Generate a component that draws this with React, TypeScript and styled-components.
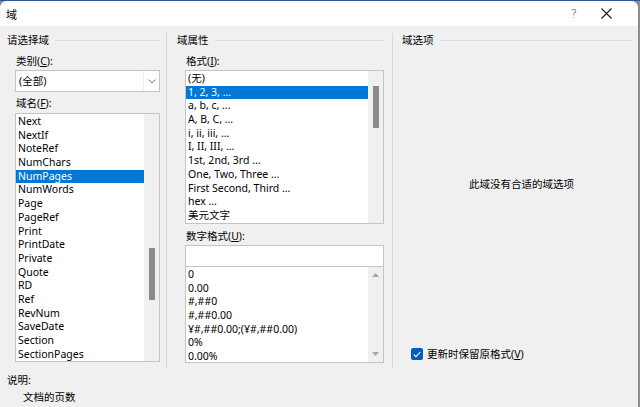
import React from 'react';
import styled, { createGlobalStyle } from 'styled-components';

const GlobalStyle = createGlobalStyle`
    html, body {
        margin: 0;
        padding: 0;
        background: linear-gradient(#34558c 0 1px, #8e8e8e 1px);
        height: 407px;
        overflow: hidden;
    }
    * {
        box-sizing: border-box;
    }
`;

const fieldNames = [
    'Next', 'NextIf', 'NoteRef', 'NumChars', 'NumPages', 'NumWords', 'Page', 'PageRef', 'Print',
    'PrintDate', 'Private', 'Quote', 'RD', 'Ref', 'RevNum', 'SaveDate', 'Section', 'SectionPages',
];

const formats = [
    '(无)', '1, 2, 3, ...', 'a, b, c, ...', 'A, B, C, ...', 'i, ii, iii, ...', 'I, II, III, ...',
    '1st, 2nd, 3rd ...', 'One, Two, Three ...', 'First Second, Third ...', 'hex ...', '美元文字',
];

const numberFormats = ['0', '0.00', '#,##0', '#,##0.00', '¥#,##0.00;(¥#,##0.00)', '0%', '0.00%'];

const App = () => {
    return (
        <>
            <GlobalStyle />
            <Window>
                <TitleBar>
                    <Title>域</Title>
                    <TitleButtons>
                        <Help>?</Help>
                        <svg width="11" height="11" viewBox="0 0 11 11">
                            <path d="M0.5 0.5 L10.5 10.5 M10.5 0.5 L0.5 10.5" stroke="#1a1a1a" strokeWidth="1.1" />
                        </svg>
                    </TitleButtons>
                </TitleBar>

                <Columns>
                    {/* 请选择域 */}
                    <Column $width={166} $first>
                        <GroupHeading>请选择域</GroupHeading>
                        <Label $top={7}>类别(<u>C</u>):</Label>
                        <Combo $width={145}>
                            <ComboText>(全部)</ComboText>
                            <ComboButton>
                                <svg width="8" height="5" viewBox="0 0 8 5">
                                    <path d="M0.5 0.5 L4 4 L7.5 0.5" fill="none" stroke="#7a7a7a" strokeWidth="1" />
                                </svg>
                            </ComboButton>
                        </Combo>
                        <Label $top={4}>域名(<u>F</u>):</Label>
                        <ListBox $width={145} $height={249} $top={3}>
                            <Items>
                                {fieldNames.map((name) => (
                                    <Item key={name} $selected={name === 'NumPages'}>{name}</Item>
                                ))}
                            </Items>
                            <ScrollTrack>
                                <Thumb $offset={134} $size={52} />
                            </ScrollTrack>
                        </ListBox>
                    </Column>

                    {/* 域属性 */}
                    <Column $width={226}>
                        <GroupHeading>域属性</GroupHeading>
                        <Label $top={7}>格式(<u>I</u>):</Label>
                        <ListBox $width={199} $height={154} $top={2}>
                            <Items>
                                {formats.map((f) => (
                                    <Item key={f} $selected={f === '1, 2, 3, ...'}>{f}</Item>
                                ))}
                            </Items>
                            <ScrollTrack>
                                <Thumb $offset={15} $size={42} />
                            </ScrollTrack>
                        </ListBox>
                        <Label $top={5}>数字格式(<u>U</u>):</Label>
                        <TextInput />
                        <ListBox $width={199} $height={97} $top={0}>
                            <Items>
                                {numberFormats.map((f) => (
                                    <Item key={f}>{f}</Item>
                                ))}
                            </Items>
                            <ArrowTrack>
                                <svg width="7" height="4" viewBox="0 0 7 4">
                                    <path d="M0 4 L3.5 0 L7 4 Z" fill="#a6a6a6" />
                                </svg>
                                <svg width="7" height="4" viewBox="0 0 7 4">
                                    <path d="M0 0 L3.5 4 L7 0 Z" fill="#a6a6a6" />
                                </svg>
                            </ArrowTrack>
                        </ListBox>
                    </Column>

                    {/* 域选项 */}
                    <Column $width={246} $last>
                        <GroupHeading>域选项</GroupHeading>
                        <EmptyMessage>此域没有合适的域选项</EmptyMessage>
                        <CheckRow>
                            <CheckBox>
                                <svg width="8" height="7" viewBox="0 0 8 7">
                                    <path d="M0.8 3.6 L3 5.6 L7.2 1" fill="none" stroke="#ffffff" strokeWidth="1.1" />
                                </svg>
                            </CheckBox>
                            <span>更新时保留原格式(<u>V</u>)</span>
                        </CheckRow>
                    </Column>
                </Columns>

                <Description>
                    <div>说明:</div>
                    <DescriptionText>文档的页数</DescriptionText>
                </Description>
            </Window>
        </>
    );
};

const Window = styled.div`
    margin-top: 1px;
    width: 638px;
    height: 406px;
    background-color: #f0f0f0;
    border-radius: 7px 7px 0 0;
    overflow: hidden;
    font-family: "Noto Sans", "Noto Sans CJK SC", sans-serif;
    font-size: 10.5px;
    color: #000;
    display: flex;
    flex-direction: column;
`;

const TitleBar = styled.div`
    height: 25px;
    background-color: #ffffff;
    display: flex;
    align-items: center;
    justify-content: space-between;
    padding: 0 26px 0 6px;
`;

const Title = styled.span`
    font-family: "Noto Sans CJK SC", sans-serif;
    font-size: 11px;
`;

const TitleButtons = styled.div`
    display: flex;
    align-items: center;
    gap: 24px;
`;

const Help = styled.span`
    font-family: "DejaVu Sans", sans-serif;
    font-size: 12px;
    font-weight: 300;
    color: #4a4a4a;
`;

const Columns = styled.div`
    display: flex;
    align-items: flex-start;
`;

const Column = styled.div<{ $width: number; $first?: boolean; $last?: boolean }>`
    width: ${(p) => p.$width}px;
    height: 335px;
    margin-top: 7px;
    display: flex;
    flex-direction: column;
    padding: ${(p) => (p.$first ? '0 6px 0 7px' : p.$last ? '0 5px 0 9px' : '0 8px 0 10px')};
    border-left: ${(p) => (p.$first ? 'none' : '1px solid #d6d6d6')};
`;

const GroupHeading = styled.div`
    height: 14px;
    line-height: 14px;
    display: flex;
    align-items: center;
    white-space: nowrap;

    &::after {
        content: '';
        flex: 1;
        height: 1px;
        margin-left: 6px;
        background-color: #dcdcdc;
    }
`;

const Label = styled.div<{ $top: number }>`
    margin-top: ${(p) => p.$top}px;
    margin-left: 9px;
    height: 14px;
    line-height: 14px;

    u {
        text-underline-offset: 1px;
    }
`;

const Combo = styled.div<{ $width: number }>`
    margin-top: 2px;
    margin-left: 8px;
    width: ${(p) => p.$width}px;
    height: 22px;
    background-color: #ffffff;
    border: 1px solid #c4c4c4;
    display: flex;
`;

const ComboText = styled.div`
    flex: 1;
    padding-left: 3px;
    line-height: 20px;
`;

const ComboButton = styled.div`
    width: 16px;
    border-left: 1px solid #ececec;
    display: flex;
    align-items: center;
    justify-content: center;
`;

const ListBox = styled.div<{ $width: number; $height: number; $top: number }>`
    margin-top: ${(p) => p.$top}px;
    margin-left: 8px;
    width: ${(p) => p.$width}px;
    height: ${(p) => p.$height}px;
    background-color: #ffffff;
    border: 1px solid #c4c4c4;
    display: flex;
    overflow: hidden;
`;

const Items = styled.div`
    flex: 1;
    display: flex;
    flex-direction: column;
    padding-top: 1px;
`;

const Item = styled.div<{ $selected?: boolean }>`
    flex-shrink: 0;
    height: 13.7px;
    line-height: 13.7px;
    padding-left: 2px;
    white-space: nowrap;
    background-color: ${(p) => (p.$selected ? '#0078d7' : 'transparent')};
    color: ${(p) => (p.$selected ? '#ffffff' : '#000000')};
`;

const ScrollTrack = styled.div`
    width: 15px;
    background-color: #f0f0f0;
    display: flex;
    flex-direction: column;
    align-items: center;
`;

const Thumb = styled.div<{ $offset: number; $size: number }>`
    margin-top: ${(p) => p.$offset}px;
    width: 6px;
    height: ${(p) => p.$size}px;
    background-color: #8a8a8a;
`;

const ArrowTrack = styled.div`
    width: 15px;
    background-color: #f0f0f0;
    display: flex;
    flex-direction: column;
    align-items: center;
    justify-content: space-between;
    padding: 6px 0 6px;
`;

const TextInput = styled.div`
    margin-top: 2px;
    margin-left: 8px;
    width: 199px;
    height: 21px;
    background-color: #ffffff;
    border: 1px solid #c4c4c4;
    border-bottom: none;
`;

const EmptyMessage = styled.div`
    margin-top: 130px;
    line-height: 14px;
    text-align: center;
    padding-left: 8px;
`;

const CheckRow = styled.div`
    margin-top: auto;
    margin-bottom: 7px;
    margin-left: 9px;
    display: flex;
    align-items: center;
    gap: 4px;
    line-height: 14px;
`;

const CheckBox = styled.div`
    width: 12px;
    height: 12px;
    border-radius: 2px;
    background-color: #005fb8;
    display: flex;
    align-items: center;
    justify-content: center;
`;

const Description = styled.div`
    margin-top: 5px;
    padding-left: 7px;
    line-height: 14px;
    display: flex;
    flex-direction: column;
    gap: 3px;
`;

const DescriptionText = styled.div`
    padding-left: 16px;
`;

export default App;
